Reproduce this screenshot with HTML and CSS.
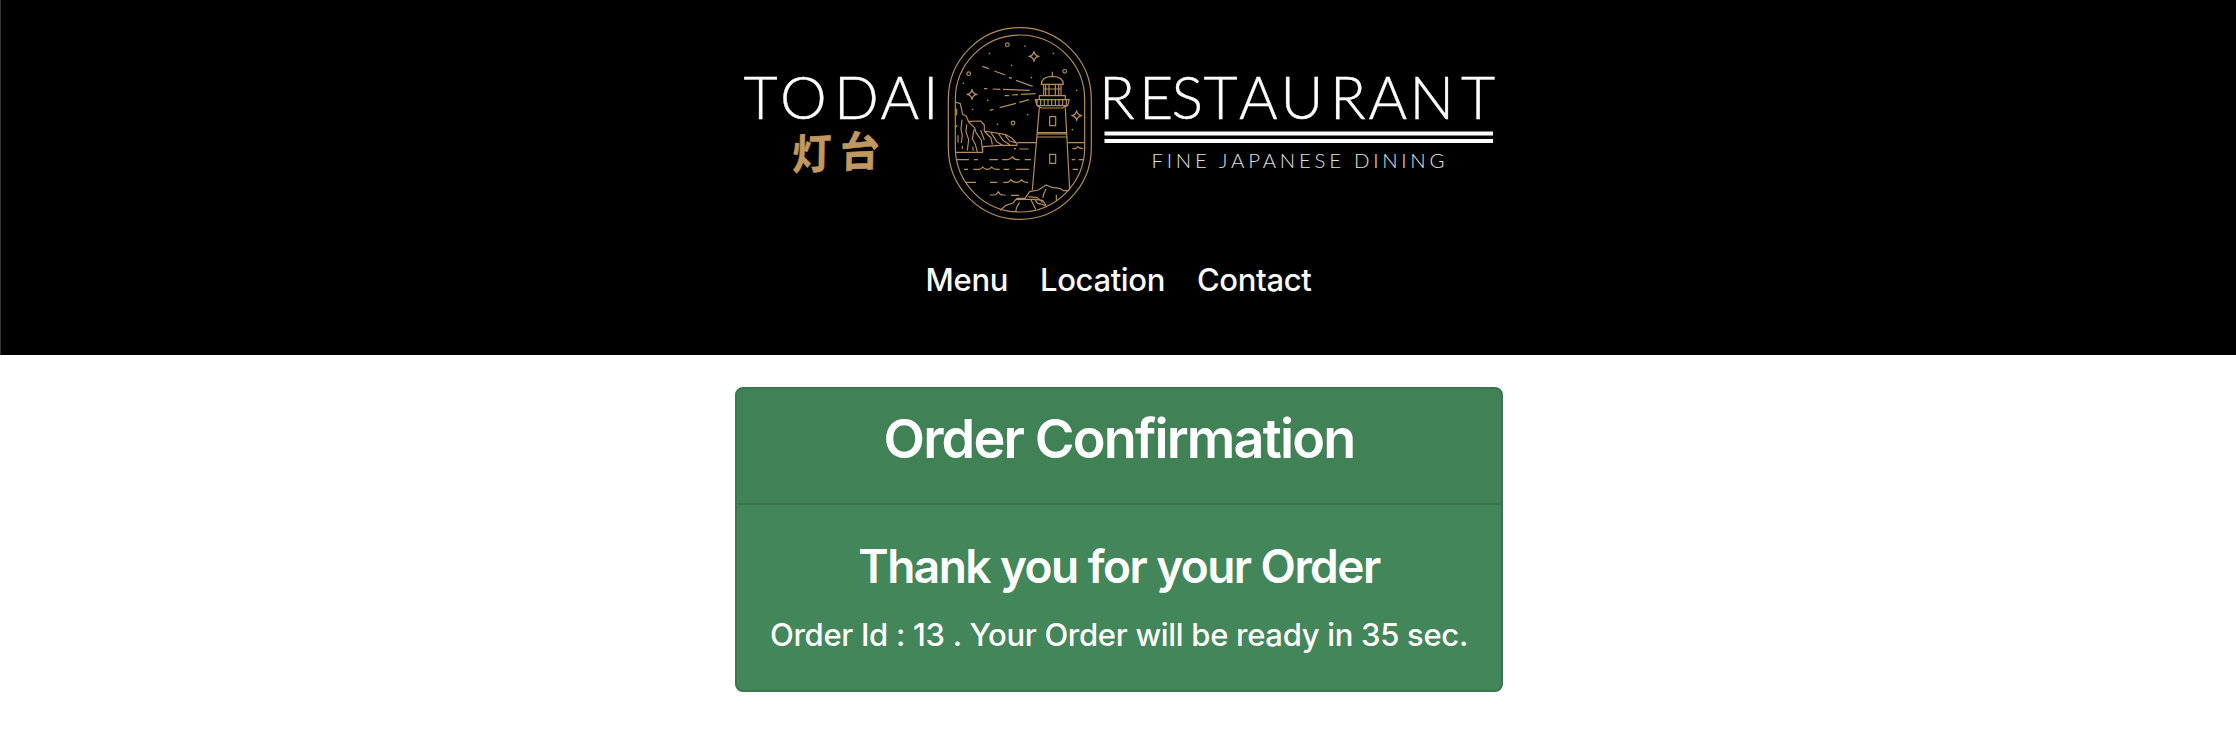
FILE: index.html
```html
<!DOCTYPE html>
<html lang="en">
<head>
<meta charset="utf-8">
<title>Todai Restaurant</title>
<link rel="stylesheet" href="styles.css">
</head>
<body>
<header class="site-header">
  <svg class="logo" viewBox="735 0 768 240" role="img" aria-label="Todai Restaurant">
    <text class="word" y="119" x="743.5 780 834 880.5 923">TODAI</text>
    <text class="word" y="119" x="1099 1139 1171.5 1203.5 1239 1280.5 1330 1368.5 1409.5 1461">RESTAURANT</text>
    <g class="rules">
      <rect x="1104.5" y="131.5" width="388.5" height="4"/>
      <rect x="1104.5" y="139" width="388.5" height="4"/>
    </g>
    <text class="tagline" x="1151.5" y="168" textLength="293">FINE JAPANESE DINING</text>
    <text class="kanji" transform="translate(792 170) skewX(-4) rotate(-3) scale(1 1.07)" x="0 48" y="0">灯台</text>
    <g class="emblem" transform="translate(730 10) scale(.33333)">
      <rect x="655" y="53" width="429" height="575" rx="214.5"/>
      <rect x="676" y="75" width="388" height="531" rx="194"/>
      <!-- stars -->
      <circle cx="832" cy="104" r="5.5"/><circle cx="716" cy="191" r="5.5"/>
      <circle cx="1004" cy="184" r="5.5"/><circle cx="849" cy="339" r="5.5"/>
      <path d="M912 124q2 13 15 15q-13 2-15 15q-2-13-15-15q13-2 15-15zM726 238q2 13 15 15q-13 2-15 15q-2-13-15-15q13-2 15-15zM1040 302q2 13 15 15q-13 2-15 15q-2-13-15-15q13-2 15-15z"/>
      <path class="dots" d="M778 130h.1M885 108h.1M970 130h.1M845 166h.1M700 220h.1M904 203h.1M1040 241h.1M773 271h.1M728 298h.1M893 314h.1M802 343h.1M1027 359h.1"/>
      <!-- light beams -->
      <path d="M757 169l20 7M793 183l33 12M837 202l9 3M858 211l50 18M762 236h10M788 237l23 1M819 238l80 3M824 257h13M846 255l18-1M873 253l44-2M779 301l11-3M809 293l49-13M868 277l29-8"/>
      <!-- lighthouse -->
      <path d="M967 185v15M934 223q0-23 33-24q33 1 33 24zM941 223v34M993 223v34M947 223v34M986 223v34M957 223v34M976 223v34M941 237h52M928 269v-12h78v12M916 269h102l-5 18-16 7h-62l-14-7zM921 269v18M932 269v18M943 269v18M954 269v18M965 269v18M976 269v18M987 269v18M998 269v18M1009 269v18M921 287h92M928 293l-21 247M1006 293l13 247M922 368h87M921 381h89M922 372h87M959 320h18v27h-18zM959 433h18v27h-18z"/>
      <!-- cliffs -->
      <path d="M676 276l15 5 7 32 11 6 7 17 18 17 4 15 16 22 4 37M676 427h82v-18M717 334l35-1 11 12v18l65 11 17 10 16 17v5h-50l-52 4M680 296v20M682 345l-6 8M696 329l-3 28 4 20-3 22M684 376v22M710 343l-2 22 8 24-4 32M732 358l-5 28 9 17 6 22M752 361l11 29M697 407v10M728 410l2 12M763 363l20 21 4 20M783 368l17 27 22 13M806 372l14 20 20 12M826 376l13 17 20 6"/>
      <!-- sea -->
      <path d="M862 398h58M1013 398h50M852 416h6M868 417h28M680 449h37M732 449h12M778 449h26M816 449h17q10-1 14-9 5 9 14 9h8M884 449h19M702 478h12M730 478h17q7-1 11-7 5 7 14 7 9 0 13-7 5 7 14 7h10M821 478h16M857 478h40M706 517h32M780 517h22M820 517h12q7-1 11-8 5 8 16 8 11 0 15-8 5 8 14 8h6M779 555h12q10-1 14-10 5 10 14 10h8M843 556h24M1027 416h8q6-1 9-6 4 6 15 6M1025 449h10M1046 449h14M1028 478h16"/>
      <!-- rocks -->
      <path d="M810 601l18-15 21-7 9-11h56l9 12 14 3 14 7M858 568l3-3h24l14-20 26-5 23-15 18 7 23 3 12 7h16M948 537l-8 18-1 9M979 554v18M869 577l-8 13-4 14M903 569l14 29M914 568l24 3 10 15M895 560l27 3 16 14"/>
    </g>
  </svg>
  <nav class="nav">
    <a class="nav-link" href="#">Menu</a>
    <a class="nav-link" href="#">Location</a>
    <a class="nav-link" href="#">Contact</a>
  </nav>
</header>
<main class="content">
  <section class="card">
    <div class="card-header"><h1 class="title">Order Confirmation</h1></div>
    <div class="card-body">
      <h2 class="subtitle">Thank you for your Order</h2>
      <p class="message">Order Id : 13 . Your Order will be ready in 35 sec.</p>
    </div>
  </section>
</main>
</body>
</html>
```

FILE: styles.css
```css
* { box-sizing: border-box; }
body {
  margin: 0;
  background: #fff;
  color: #fff;
  font-family: Inter, "Liberation Sans", sans-serif;
}
.site-header {
  height: 355px;
  background: #000;
  border-left: 1px solid #333;
  display: flex;
  flex-direction: column;
  align-items: center;
}
.logo { display: block; width: 768px; height: 240px; flex: none; }
.word { font: 300 59px Lato, sans-serif; fill: #fff; stroke: #fff; stroke-width: .4; }
.tagline { font: 300 20.4px Lato, sans-serif; fill: #e0e0e0; }
.kanji { font: 700 39px "Noto Sans CJK JP", sans-serif; fill: #c1985f; stroke: #c1985f; stroke-width: .6; stroke-linejoin: round; }
.rules { fill: #fff; }
.emblem {
  fill: none;
  stroke: #b58d56;
  stroke-width: 3.6;
  stroke-linejoin: round;
}
.dots { stroke-width: 5; stroke-linecap: round; }
.nav { display: flex; gap: 32px; padding-top: 20px; }
.nav-link {
  color: #fafafa;
  text-decoration: none;
  font-size: 31px;
  font-weight: 450;
  letter-spacing: -.35px;
  line-height: 40px;
}
.content { display: flex; justify-content: center; padding: 32px 0 0 2px; }
.card {
  width: 768px;
  height: 305px;
  border: 2px solid #39764f;
  border-radius: 8px;
  background: #42865a;
  text-align: center;
  overflow: hidden;
}
.card-header {
  height: 116px;
  padding-top: 16px;
  background: #408256;
  border-bottom: 2px solid #39764f;
}
.title { margin: 0; font-weight: 600; font-size: 54px; line-height: 67px; letter-spacing: -1.85px; }
.card-body { padding-top: 32px; }
.subtitle { margin: 0; font-weight: 600; font-size: 46px; line-height: 58px; letter-spacing: -1.55px; }
.message { margin: 16px 0 0; font-size: 31px; font-weight: 450; line-height: 48px; letter-spacing: -.3px; white-space: nowrap; }
```
